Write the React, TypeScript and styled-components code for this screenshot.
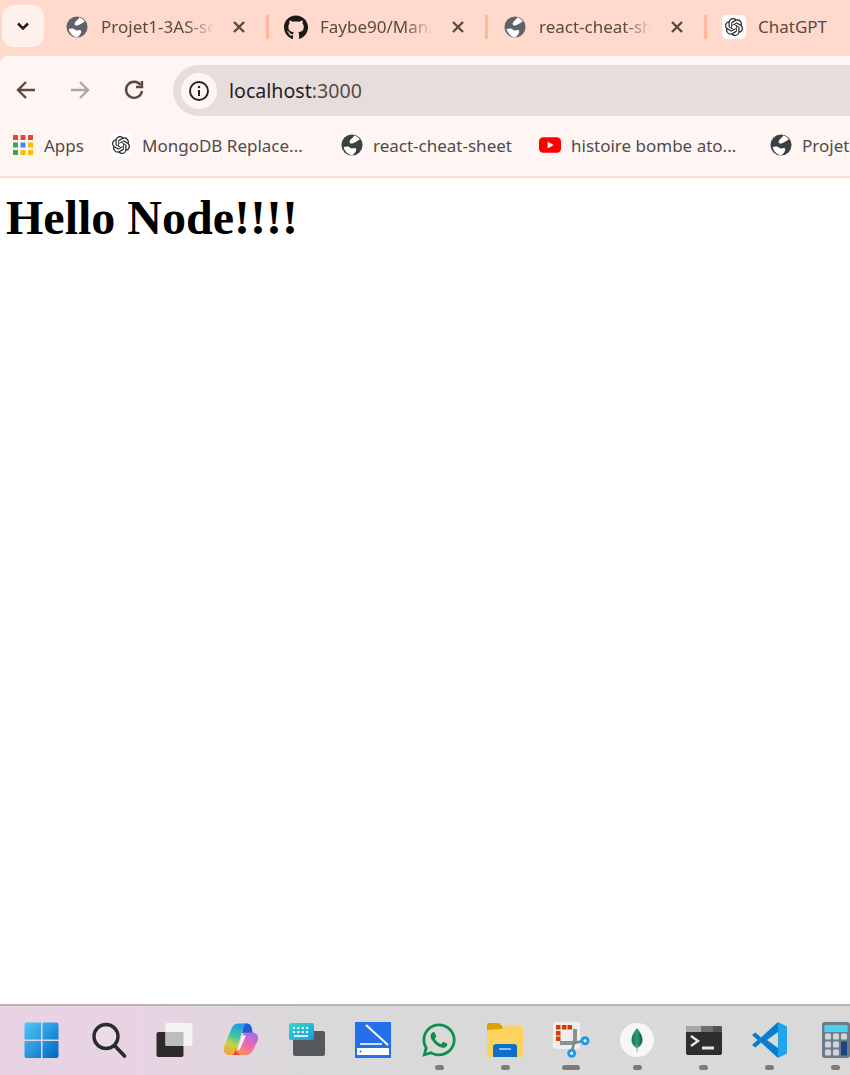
import React from 'react';
import styled, { createGlobalStyle } from 'styled-components';
import { FaGithub, FaWhatsapp } from 'react-icons/fa';
import { SiOpenai } from 'react-icons/si';

const GlobalStyle = createGlobalStyle`
    html, body {
        margin: 0;
        padding: 0;
        height: 100%;
        overflow: hidden;
        background: #fff;
    }
    #root {
        height: 100%;
    }
`;
const Screen = styled.div`
    display: flex;
    flex-direction: column;
    height: 1075px;
    width: 850px;
    overflow: hidden;
    background: #ffd9cb;
    font-family: 'Noto Sans', 'Open Sans', sans-serif;
`;
const TabStrip = styled.div`
    display: flex;
    align-items: flex-start;
    flex: none;
    height: 56px;
    padding: 5px 0 0 2px;
    box-sizing: border-box;
    gap: 6px;
    white-space: nowrap;
`;
const TabMenuButton = styled.div`
    display: flex;
    align-items: center;
    justify-content: center;
    flex: none;
    width: 42px;
    height: 42px;
    border-radius: 12px;
    background: #fff1ec;
`;
const TabList = styled.div`
    display: flex;
`;
const Tab = styled.div`
    display: flex;
    align-items: center;
    flex: none;
    width: 219px;
    height: 44px;
    padding-left: 15px;
    box-sizing: border-box;
`;
const TabIcon = styled.div`
    display: flex;
    align-items: center;
    justify-content: center;
    flex: none;
    width: 24px;
    height: 24px;
`;
const TabTitle = styled.div<{ $fade: boolean }>`
    flex: none;
    width: 121px;
    margin-left: 12px;
    overflow: hidden;
    font-size: 17px;
    line-height: 24px;
    color: #5b4943;
    ${(p) =>
        p.$fade &&
        `mask-image: linear-gradient(to right, #000 70%, transparent 93%);`}
`;
const TabClose = styled.svg`
    flex: none;
    width: 14px;
    height: 14px;
    margin-left: 10px;
`;
const TabDivider = styled.div`
    flex: none;
    width: 3px;
    height: 24px;
    margin-left: 20px;
    background: #ffb79d;
`;
const WhiteTile = styled.div`
    display: flex;
    align-items: center;
    justify-content: center;
    width: 24px;
    height: 24px;
    border-radius: 5px;
    background: #fff;
    color: #222;
`;
const Toolbar = styled.div`
    display: flex;
    align-items: center;
    flex: none;
    height: 60px;
    padding: 9px 0 0 8px;
    box-sizing: border-box;
    border-radius: 8px 0 0 0;
    background: #fff6f4;
`;
const NavButton = styled.div`
    display: flex;
    align-items: center;
    justify-content: center;
    flex: none;
    width: 36px;
    height: 36px;
    margin-right: 18px;
    padding-bottom: 1px;
    box-sizing: border-box;
`;
const Omnibox = styled.div`
    display: flex;
    align-items: center;
    flex: 1;
    height: 51px;
    margin-left: 3px;
    margin-right: -30px;
    padding-left: 8px;
    border-radius: 26px;
    background: #e7dddc;
`;
const InfoBadge = styled.div`
    display: flex;
    align-items: center;
    justify-content: center;
    flex: none;
    width: 36px;
    height: 36px;
    border-radius: 50%;
    background: #fff6f4;
`;
const Url = styled.div`
    margin-left: 12px;
    font-size: 19.6px;
    color: #1f1f1f;
`;
const UrlPort = styled.span`
    color: #544a48;
`;
const BookmarkBar = styled.div`
    display: flex;
    align-items: center;
    flex: none;
    height: 62px;
    padding: 0 0 2px 12px;
    box-sizing: border-box;
    border-bottom: 2px solid #f9ded4;
    background: #fff6f4;
    white-space: nowrap;
`;
const Bookmark = styled.div<{ $width: number }>`
    display: flex;
    align-items: center;
    flex: none;
    gap: 10px;
    width: ${(p) => p.$width}px;
`;
const BookmarkIcon = styled.div`
    display: flex;
    align-items: center;
    justify-content: center;
    flex: none;
    width: 22px;
    height: 22px;
`;
const BookmarkLabel = styled.span`
    font-size: 17px;
    color: #4f4a4a;
`;
const Page = styled.main`
    flex: 1;
    background: #fff;
`;
const Heading = styled.h1`
    margin: 12px 0 0 6px;
    font-family: 'Liberation Serif', 'Times New Roman', serif;
    font-size: 48px;
    font-weight: bold;
    color: #000;
`;
const Taskbar = styled.footer`
    display: flex;
    flex: none;
    height: 71px;
    padding: 15px 0 0 9px;
    box-sizing: border-box;
    border-top: 2px solid #b6b2b6;
    background: linear-gradient(to right, #e8d3e4 0, #e8d3e4 130px, #d9d9d9 310px);
`;
const TaskSlot = styled.div`
    display: flex;
    flex-direction: column;
    align-items: center;
    flex: none;
    width: 66.17px;
`;
const TaskIcon = styled.svg`
    display: block;
    width: 38px;
    height: 38px;
`;
const TaskIconBox = styled.div<{ $color: string }>`
    display: flex;
    align-items: center;
    justify-content: center;
    width: 38px;
    height: 38px;
    color: ${(p) => p.$color};
`;
const RunningDot = styled.div<{ $wide?: boolean }>`
    width: ${(p) => (p.$wide ? 18 : 9)}px;
    height: 5px;
    margin-top: 6px;
    border-radius: 3px;
    background: #7b7b7b;
`;

const Globe = ({ color, size }: { color: string; size: number }) => (
    <svg width={size} height={size} viewBox="0 0 24 24">
        <circle cx="12" cy="12" r="11.5" fill={color} />
        <path
            d="M14.5 1.5C13.5 4 10.5 5 9.5 7.5 8.8 9.8 11 11 13 10.2 15.5 9 18.5 8 20.5 5.5 19 3.5 17 2.2 14.500 1.5z"
            fill="#fff"
        />
        <path
            d="M2.8 14.5C5 13.5 8 13 10 15c1.500 1.500 3 .5 5 .3 2-.1 2 2.700.5 4.700-1 1.500-2 2.600-3 3.300C8 23 4.500 19.500 2.800 14.500z"
            fill="#fff"
        />
    </svg>
);

const CloseGlyph = () => (
    <TabClose viewBox="0 0 14 14">
        <path d="M2 2l10 10M12 2L2 12" stroke="#5b4943" strokeWidth="2.4" />
    </TabClose>
);

const OpenAiTile = () => (
    <WhiteTile>
        <SiOpenai size={18} />
    </WhiteTile>
);

const AppsGrid = () => (
    <svg width="22" height="22" viewBox="0 0 22 22">
        {[
            ['#ea4335', '#ea4335', '#ea4335'],
            ['#34a853', '#4285f4', '#fbbc05'],
            ['#34a853', '#fbbc05', '#fbbc05'],
        ].map((row, y) =>
            row.map((c, x) => (
                <rect key={`${x}-${y}`} x={1 + x * 7.5} y={1 + y * 7.5} width="5" height="5" fill={c} />
            )),
        )}
    </svg>
);

const YouTube = () => (
    <svg width="24" height="18" viewBox="0 0 24 18">
        <rect width="24" height="17" y="0.5" rx="4.5" fill="#f00" />
        <path d="M9.5 5.2L16 9l-6.5 3.8z" fill="#fff" />
    </svg>
);

const WindowsIcon = () => (
    <TaskIcon viewBox="0 0 38 38">
        <defs>
            <linearGradient id="win" x1="0" y1="0" x2="1" y2="1">
                <stop offset="0" stopColor="#4fc8fb" />
                <stop offset="1" stopColor="#0067c0" />
            </linearGradient>
        </defs>
        <path
            d="M1.500 3.500a2 2 0 012-2h14.500v17H1.500zM19.500 1.500h14a2 2 0 012 2v15h-16zM1.500 20H18v17H3.500a2 2 0 01-2-2zM19.500 20h16v15a2 2 0 01-2 2h-14z"
            fill="url(#win)"
        />
    </TaskIcon>
);
const SearchIcon = () => (
    <TaskIcon viewBox="0 0 38 38">
        <circle cx="17" cy="15.500" r="12" fill="#ecdce9" stroke="#2b2b2b" strokeWidth="3.4" />
        <path d="M26 25l9.500 10" stroke="#2b2b2b" strokeWidth="3.6" strokeLinecap="round" />
    </TaskIcon>
);
const TaskViewIcon = () => (
    <TaskIcon viewBox="0 0 38 38">
        <rect x="1.5" y="11" width="27" height="25" rx="2" fill="#2d2b2a" />
        <rect x="10.500" y="2" width="27" height="23" rx="2" fill="#f4f4f4" />
        <rect x="10.500" y="11" width="18" height="14" fill="#bdbdbd" />
    </TaskIcon>
);
const CopilotIcon = () => (
    <TaskIcon viewBox="0 0 38 38">
        <defs>
            <linearGradient id="copA" x1="0.6" y1="0" x2="0.3" y2="1">
                <stop offset="0" stopColor="#1c9be6" />
                <stop offset="0.4" stopColor="#3fc6a0" />
                <stop offset="0.68" stopColor="#c8d43a" />
                <stop offset="1" stopColor="#f6a13c" />
            </linearGradient>
            <linearGradient id="copB" x1="0.7" y1="0" x2="0.3" y2="1">
                <stop offset="0" stopColor="#a86bea" />
                <stop offset="0.5" stopColor="#ee68b0" />
                <stop offset="1" stopColor="#f89058" />
            </linearGradient>
        </defs>
        <path d="M22 2.500h3c3 0 4.500 2.500 5 5.500l.6 4H20z" fill="#1d5fd0" />
        <path
            d="M16 2.500h9c-3 1-4.500 5.500-5.500 9.500L15 28c-1 4-3 6-6 6H7c-4 0-6-4-5-8L9 8.500C10.500 4.500 13 2.500 16 2.500z"
            fill="url(#copA)"
        />
        <path
            d="M22 11.500h8c4 0 7 3 6 7.500l-4.500 9c-1.500 4-4 6-8 6H11c3-1 4.500-3 5.500-6.500z"
            fill="url(#copB)"
        />
        <path d="M13.500 27c.5 3.500 2.500 6 5.500 7h-9c2.500-1 3-4 3.500-7z" fill="#ee4a35" />
        <path d="M20 14.500h4l-6.500 15-1.500-1.500z" fill="#f5eef2" />
    </TaskIcon>
);
const KeyboardIcon = () => (
    <TaskIcon viewBox="0 0 38 38">
        <defs>
            <linearGradient id="kbd" x1="0" y1="0" x2="1" y2="1">
                <stop offset="0" stopColor="#2fdccb" />
                <stop offset="1" stopColor="#1c9bde" />
            </linearGradient>
        </defs>
        <rect x="5" y="10" width="32" height="25" rx="2" fill="#55595c" />
        <rect x="1" y="2" width="25" height="17" rx="2" fill="url(#kbd)" />
        <path d="M5 7h17M5 11h17" stroke="#fff" strokeWidth="2" strokeDasharray="2 2.400" />
        <path d="M6 15h14" stroke="#fff" strokeWidth="1.8" />
    </TaskIcon>
);
const ScannerIcon = () => (
    <TaskIcon viewBox="0 0 38 38">
        <rect x="1" y="1" width="36" height="36" fill="#2470ea" />
        <path d="M12 4l22 20" stroke="#fff" strokeWidth="2" />
        <path d="M6 23h22" stroke="#fff" strokeWidth="1.6" />
        <rect x="3" y="27" width="32" height="7" fill="#fff" />
        <circle cx="6.5" cy="30.5" r="1" fill="#2470ea" />
    </TaskIcon>
);
const FolderIcon = () => (
    <TaskIcon viewBox="0 0 38 38">
        <path d="M1 4a2 2 0 012-2h10l4 4v6H1z" fill="#d9a204" />
        <path d="M1 9l15-1 4-3h15a2 2 0 012 2v27a2 2 0 01-2 2H3a2 2 0 01-2-2z" fill="#fdd25f" />
        <path d="M7 36V26a3 3 0 013-3h18a3 3 0 013 3v10z" fill="#0f6fc6" />
        <path d="M13 28h12" stroke="#8ed0f6" strokeWidth="1.8" />
    </TaskIcon>
);
const SnipIcon = () => (
    <TaskIcon viewBox="0 0 38 38">
        <rect x="1" y="1" width="27" height="27" rx="3" fill="#eceef0" />
        <path
            d="M4 4h4.500v4.500H4zM10 4h4.500v4.500H10zM15.500 4H20v4.500h-4.500zM4 10h4.500v4.500H4zM4 15.500h4.500V20H4z"
            fill="#d83b01"
        />
        <path d="M8 22h12a3 3 0 003-3V8" stroke="#8b9094" strokeWidth="4" fill="none" />
        <path d="M22 22l9-2M22 22l-2 8" stroke="#7d8286" strokeWidth="2.5" />
        <circle cx="33" cy="19.700" r="3" fill="#fff" stroke="#1e9be8" strokeWidth="3" />
        <circle cx="19.700" cy="32.300" r="3" fill="#fff" stroke="#1e9be8" strokeWidth="3" />
    </TaskIcon>
);
const MongoIcon = () => (
    <TaskIcon viewBox="0 0 38 38">
        <defs>
            <linearGradient id="leaf" x1="0" y1="0" x2="1" y2="0">
                <stop offset="0" stopColor="#0c7a5a" />
                <stop offset="0.5" stopColor="#2f9a78" />
                <stop offset="1" stopColor="#0a5c46" />
            </linearGradient>
        </defs>
        <circle cx="19" cy="19" r="17" fill="#f7f7f5" />
        <path d="M19 7c3 4 5.500 7.500 5.500 12 0 4-3 7-5.500 8.500-2.500-1.500-5.500-4.500-5.500-8.500 0-4.500 2.500-8 5.500-12z" fill="url(#leaf)" />
        <path d="M19 24v7" stroke="#9aa89f" strokeWidth="1" />
    </TaskIcon>
);
const TerminalIcon = () => (
    <TaskIcon viewBox="0 0 38 38">
        <rect x="1" y="5" width="36" height="29" rx="2" fill="#2e2e2e" />
        <path d="M3 5h13v6H1V7a2 2 0 012-2z" fill="#a9a9a9" />
        <rect x="16" y="5" width="12" height="6" fill="#6f6f6f" />
        <path d="M28 5h7a2 2 0 012 2v4h-9z" fill="#535353" />
        <path d="M6 15l7 5-7 5" stroke="#e6e6e6" strokeWidth="2.4" fill="none" />
        <path d="M17 27h12" stroke="#e6e6e6" strokeWidth="3" />
    </TaskIcon>
);
const VsCodeIcon = () => (
    <TaskIcon viewBox="0 0 38 38">
        <path
            d="M27 1L10 16.500 4.500 11.500 1 14l5.500 5L1 24l3.500 2.500L10 21.500 27 37V27l-11-8 11-8z"
            fill="#0b7dd1"
        />
        <path d="M27 1l9 4.500v27L27 37z" fill="#21a5f0" />
    </TaskIcon>
);
const CalculatorIcon = () => (
    <TaskIcon viewBox="0 0 38 38">
        <rect x="5" y="1" width="28" height="36" rx="3" fill="#6d7a87" />
        <rect x="7.500" y="4" width="23" height="7" fill="#4dd0ee" />
        {[0, 1, 2].map((x) =>
            [0, 1, 2].map((y) =>
                x === 2 && y > 0 ? null : (
                    <rect key={`${x}-${y}`} x={8 + x * 8} y={12.5 + y * 8} width="6" height="6" rx="1" fill="#d2d6da" />
                ),
            ),
        )}
        <rect x="24" y="20.500" width="6" height="14" rx="1" fill="#17457f" />
    </TaskIcon>
);

const tabs = [
    { title: 'Projet1-3AS-sem', fade: true, close: true, icon: <Globe color="#5f6368" size={22} /> },
    { title: 'Faybe90/Manage', fade: true, close: true, icon: <FaGithub size={25} color="#1b1817" /> },
    { title: 'react-cheat-sheet', fade: true, close: true, icon: <Globe color="#5f6368" size={22} /> },
    { title: 'ChatGPT', fade: false, close: false, icon: <OpenAiTile /> },
];

const bookmarks = [
    { label: 'Apps', width: 98, icon: <AppsGrid /> },
    { label: 'MongoDB Replace...', width: 231, icon: <OpenAiTile /> },
    { label: 'react-cheat-sheet', width: 198, icon: <Globe color="#3c4043" size={22} /> },
    { label: 'histoire bombe ato...', width: 231, icon: <YouTube /> },
    { label: 'Projet', width: 100, icon: <Globe color="#3c4043" size={22} /> },
];

const taskItems: { icon: React.ReactNode; dot?: boolean; wide?: boolean }[] = [
    { icon: <WindowsIcon /> },
    { icon: <SearchIcon /> },
    { icon: <TaskViewIcon /> },
    { icon: <CopilotIcon /> },
    { icon: <KeyboardIcon /> },
    { icon: <ScannerIcon /> },
    {
        icon: (
            <TaskIconBox $color="#128c4e">
                <FaWhatsapp size={38} />
            </TaskIconBox>
        ),
        dot: true,
    },
    { icon: <FolderIcon />, dot: true },
    { icon: <SnipIcon />, dot: true, wide: true },
    { icon: <MongoIcon />, dot: true },
    { icon: <TerminalIcon />, dot: true },
    { icon: <VsCodeIcon />, dot: true },
    { icon: <CalculatorIcon />, dot: true },
];

const App = (): JSX.Element => {
    return (
        <Screen>
            <GlobalStyle />
            <TabStrip>
                <TabMenuButton>
                    <svg width="16" height="16" viewBox="0 0 16 16">
                        <path d="M3 5.500l5 5 5-5" fill="none" stroke="#241c19" strokeWidth="2.6" />
                    </svg>
                </TabMenuButton>
                <TabList>
                    {tabs.map((tab) => (
                        <Tab key={tab.title}>
                            <TabIcon>{tab.icon}</TabIcon>
                            <TabTitle $fade={tab.fade}>{tab.title}</TabTitle>
                            {tab.close && <CloseGlyph />}
                            {tab.close && <TabDivider />}
                        </Tab>
                    ))}
                </TabList>
            </TabStrip>
            <Toolbar>
                <NavButton>
                    <svg width="20" height="20" viewBox="0 0 20 20">
                        <path d="M19 10H3M10 2l-8 8 8 8" fill="none" stroke="#5e483e" strokeWidth="2.4" />
                    </svg>
                </NavButton>
                <NavButton>
                    <svg width="20" height="20" viewBox="0 0 20 20">
                        <path d="M1 10h16M10 2l8 8-8 8" fill="none" stroke="#b1a5a1" strokeWidth="2.4" />
                    </svg>
                </NavButton>
                <NavButton>
                    <svg width="22" height="22" viewBox="0 0 22 22">
                        <path d="M17.500 6A8 8 0 1019 12" fill="none" stroke="#5e483e" strokeWidth="2.4" />
                        <path d="M19 2v6h-6" fill="none" stroke="#5e483e" strokeWidth="2.4" />
                    </svg>
                </NavButton>
                <Omnibox>
                    <InfoBadge>
                        <svg width="22" height="22" viewBox="0 0 22 22">
                            <circle cx="11" cy="11" r="9" fill="none" stroke="#1f1f1f" strokeWidth="1.900" />
                            <path d="M11 10v6" stroke="#1f1f1f" strokeWidth="2" />
                            <circle cx="11" cy="7" r="1.200" fill="#1f1f1f" />
                        </svg>
                    </InfoBadge>
                    <Url>
                        localhost<UrlPort>:3000</UrlPort>
                    </Url>
                </Omnibox>
            </Toolbar>
            <BookmarkBar>
                {bookmarks.map((b) => (
                    <Bookmark key={b.label} $width={b.width}>
                        <BookmarkIcon>{b.icon}</BookmarkIcon>
                        <BookmarkLabel>{b.label}</BookmarkLabel>
                    </Bookmark>
                ))}
            </BookmarkBar>
            <Page>
                <Heading>Hello Node!!!!</Heading>
            </Page>
            <Taskbar>
                {taskItems.map((item, i) => (
                    <TaskSlot key={i}>
                        {item.icon}
                        {item.dot && <RunningDot $wide={item.wide} />}
                    </TaskSlot>
                ))}
            </Taskbar>
        </Screen>
    );
};

export default App;
